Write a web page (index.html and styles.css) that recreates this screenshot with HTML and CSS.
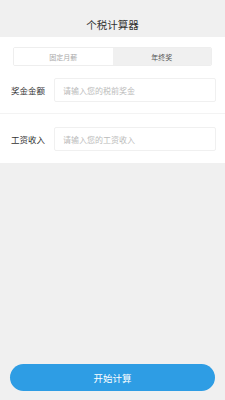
FILE: index.html
```html
<!DOCTYPE html>
<html lang="zh-CN">
<head>
    <meta charset="UTF-8">
    <meta name="viewport" content="width=device-width, initial-scale=1.0">
    <title>个税计算器</title>
    <link rel="stylesheet" href="styles.css">
</head>
<body>
    <div class="page">
        <header class="top-bar">
            <h1>个税计算器</h1>
        </header>
        <div class="panel">
            <div class="tabs">
                <div class="tab">固定月薪</div>
                <div class="tab active">年终奖</div>
            </div>
            <div class="field">
                <label>奖金金额</label>
                <input type="text" placeholder="请输入您的税前奖金">
            </div>
            <div class="field">
                <label>工资收入</label>
                <input type="text" placeholder="请输入您的工资收入">
            </div>
        </div>
        <div class="spacer"></div>
        <div class="actions">
            <button type="button">开始计算</button>
        </div>
    </div>
</body>
</html>
```

FILE: styles.css
```css
* {
    box-sizing: border-box;
}

body {
    margin: 0;
    background: #f0f0f0;
    font-family: "Noto Sans CJK SC", "Noto Sans", sans-serif;
    color: #333;
}

.page {
    display: flex;
    flex-direction: column;
    height: 400px;
}

.top-bar {
    height: 37px;
    padding-top: 17px;
    background: #f0f0f0;
}

.top-bar h1 {
    margin: 0;
    font-size: 10.5px; font-weight: normal;
    line-height: 16px;
    text-align: center;
    color: #333;
}

.panel {
    background: #fff;
    padding-top: 10px;
}

.tabs {
    display: flex;
    margin: 0 13px;
    height: 19px;
    border: 1px solid #eeeeee;
    border-radius: 2px;
    overflow: hidden;
}

.tab {
    flex: 1;
    display: flex; align-items: center; justify-content: center;
    font-size: 7px;
    color: #aaa;
    background: #fff;
}

.tab.active {
    background: #f0f0f0;
    color: #555;
}

.field {
    display: flex;
    align-items: center;
    padding: 12px 9px 11px 11px;
}

.field + .field {
    border-top: 1px solid #f3f3f3;
    padding-top: 13px; padding-bottom: 12px;
}

.field label {
    width: 43px;
    font-size: 8.5px;
    color: #333;
}

.field input {
    flex: 1;
    height: 24px;
    border: 1px solid #f0f0f0;
    border-radius: 2px;
    outline: none;
    padding: 0 8px;
    font-family: inherit;
    font-size: 8px;
    color: #333;
}

.field input::placeholder {
    color: #bbb;
}

.spacer {
    flex: 1;
}

.actions {
    padding: 0 10px 9px;
}

.actions button {
    width: 100%; height: 27px;
    border: none;
    border-radius: 14px;
    background: #2e9de4;
    color: #fff;
    font-family: inherit;
    font-size: 9.5px;
}
```
